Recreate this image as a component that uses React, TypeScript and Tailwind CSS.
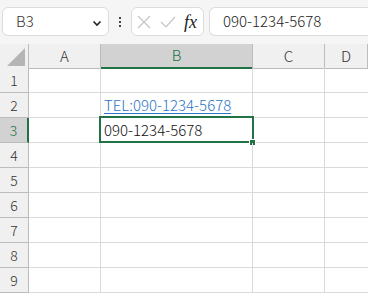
import React from 'react';

const cols = ['A', 'B', 'C', 'D'];
const rows = [1, 2, 3, 4, 5, 6, 7, 8, 9];
const gridCols = 'grid grid-cols-[29px_72px_152px_72px_1fr]';
const font = { fontFamily: '"Noto Sans CJK JP", "Noto Sans", sans-serif' };

function Toolbar() {
  return (
    <div className="flex h-[44px] items-start bg-[#f5f5f5] pt-[7px]">
      <div className="ml-[2px] flex h-[29px] w-[107px] items-center justify-between rounded-md border border-[#dcdcdc] bg-white pl-[13px] pr-[6px]">
        <span className="text-[15px] font-light text-[#333]">B3</span>
        <svg width="10" height="10" viewBox="0 0 10 10" className="mt-[2px]">
          <path d="M1.5 3.5 L5 7 L8.5 3.5" fill="none" stroke="#222" strokeWidth="1.6" />
        </svg>
      </div>
      <div className="flex h-[29px] w-[22px] flex-col items-center justify-center gap-[2px]">
        <span className="h-[2px] w-[2px] bg-[#444]" />
        <span className="h-[2px] w-[2px] bg-[#444]" />
        <span className="h-[2px] w-[2px] bg-[#444]" />
      </div>
      <div className="flex h-[29px] w-[73px] items-center rounded-md border border-[#dcdcdc] bg-white pl-[5px]">
        <svg width="14" height="14" viewBox="0 0 14 14">
          <path d="M1 1 L13 13 M13 1 L1 13" stroke="#c4c4c4" strokeWidth="1.2" fill="none" />
        </svg>
        <svg width="16" height="14" viewBox="0 0 16 14" className="ml-[9px]">
          <path d="M1 7 L6 12 L15 2" stroke="#c4c4c4" strokeWidth="1.2" fill="none" />
        </svg>
        <span className="ml-[8px] text-[18px] italic leading-none text-[#222]" style={{ fontFamily: '"Liberation Serif", serif' }}>fx</span>
      </div>
      <div className="ml-[5px] flex h-[29px] flex-1 items-center rounded-l-md border border-r-0 border-[#dcdcdc] bg-white pl-[13px]">
        <span className="text-[15px] font-light text-[#222]">090-1234-5678</span>
      </div>
    </div>
  );
}

export default function App() {
  return (
    <div className="h-[294px] w-[368px] overflow-hidden bg-white" style={font}>
      <Toolbar />
      <div className={`${gridCols} h-[24px] bg-[#f0f0f0]`}>
        <div className="flex items-end justify-end border-r border-b border-[#bcbcbc] pb-[2px] pr-[3px]">
          <svg width="18" height="18" viewBox="0 0 18 18">
            <path d="M18 0 L18 18 L0 18 Z" fill="#b5b5b5" />
          </svg>
        </div>
        {cols.map((c) =>
          c === 'B' ? (
            <div key={c} className="flex items-center justify-center border-r border-b-2 border-r-[#bcbcbc] border-b-[#217346] bg-[#d2d2d2] text-[15px] font-light text-[#217346]">
              {c}
            </div>
          ) : (
            <div key={c} className="flex items-center justify-center border-r border-b border-[#bcbcbc] text-[15px] font-light text-[#333]">
              {c}
            </div>
          )
        )}
      </div>
      {rows.map((r) => (
        <div key={r} className={`${gridCols} h-[25px]`}>
          <div
            className={
              r === 3
                ? 'flex items-center justify-center border-r-2 border-b border-r-[#217346] border-b-[#bcbcbc] bg-[#d2d2d2] text-[14px] font-light text-[#217346]'
                : 'flex items-center justify-center border-r border-b border-[#bcbcbc] bg-[#f0f0f0] text-[14px] font-light text-[#333]'
            }
          >
            {r}
          </div>
          <div className="border-r border-b border-[#dadada]" />
          <div className="relative flex items-end border-r border-b border-[#dadada] pl-[3px]">
            {r === 2 ? (
              <span className="pb-[2px] text-[15px] font-light leading-[20px] text-[#2e75c6] underline underline-offset-2">TEL:090-1234-5678</span>
            ) : null}
            {r === 3 ? (
              <>
                <span className="pb-[2px] text-[15px] font-light leading-[20px] text-[#111]">090-1234-5678</span>
                <div className="absolute -left-[2px] -top-[2px] h-[27px] w-[155px] border-2 border-[#217346]" />
                <div className="absolute -bottom-[4px] -right-[4px] h-[7px] w-[7px] border border-white bg-[#217346]" />
              </>
            ) : null}
          </div>
          <div className="border-r border-b border-[#dadada]" />
          <div className="border-b border-[#dadada]" />
        </div>
      ))}
    </div>
  );
}
